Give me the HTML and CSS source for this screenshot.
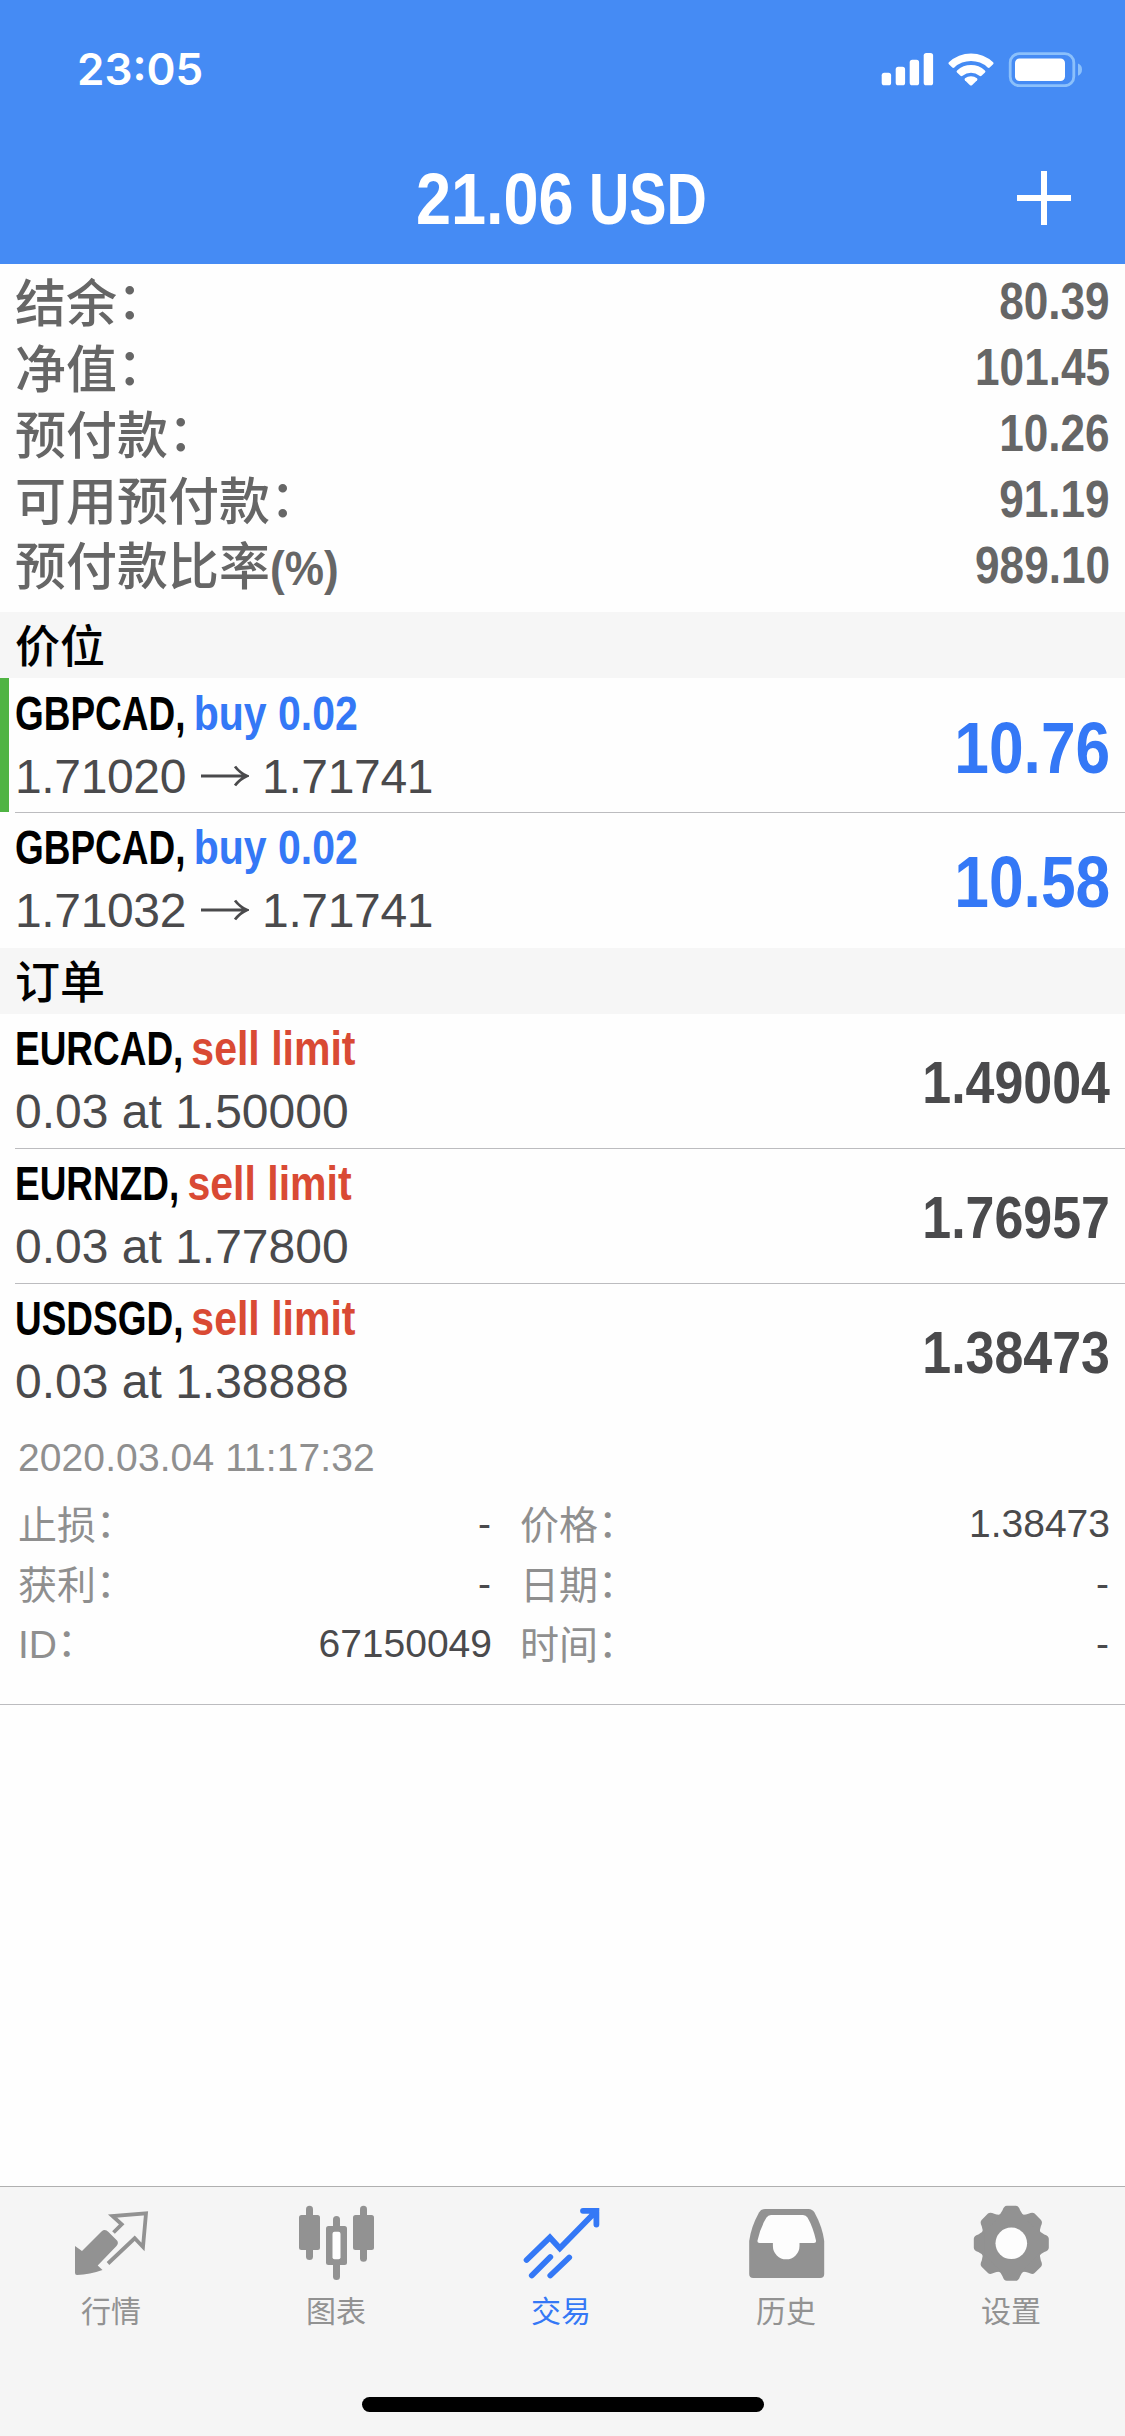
FILE: index.html
```html
<!DOCTYPE html>
<html lang="zh-CN">
<head>
<meta charset="utf-8">
<title>交易</title>
<link rel="stylesheet" href="styles.css">
</head>
<body>
<div class="app">
  <header class="header">
    <div class="status">
      <span class="clock">23:05</span>
      <svg class="status-icons" width="204" height="36" viewBox="0 0 204 36">
        <g fill="#fff">
          <rect x="1.700" y="21.700" width="9.400" height="12.600" rx="2.600"/>
          <rect x="15.700" y="15.800" width="9.400" height="18.500" rx="2.600"/>
          <rect x="29.700" y="8.800" width="9.400" height="25.500" rx="2.600"/>
          <rect x="43.700" y="2" width="9.400" height="32.300" rx="2.600"/>
          <path d="M68.900 11.300A32 32 0 0 1 113.100 11.300Q114 12.200 113.100 13.200L109.700 16.500Q108.700 17.300 107.600 16.400A24.500 24.500 0 0 0 74.400 16.400Q73.300 17.300 72.300 16.500L68.900 13.200Q68 12.200 68.900 11.300Z"/>
          <path d="M77.100 19.400A20.500 20.500 0 0 1 104.900 19.400Q106 20.400 105 21.400L101.500 24.800Q100.500 25.700 99.400 24.800A13.200 13.200 0 0 0 82.600 24.800Q81.500 25.700 80.500 24.800L77 21.400Q76 20.400 77.100 19.400Z"/>
          <path d="M85 27.300A9.500 9.500 0 0 1 97 27.300Q98 28.200 97.100 29.200L92 34.200Q91 35 90 34.200L84.900 29.200Q84 28.200 85 27.300Z"/>
          <rect x="135" y="7.500" width="50" height="22.500" rx="4.500"/>
        </g>
        <rect x="130.200" y="2.700" width="63.600" height="32" rx="9" fill="none" stroke="#8bc0fb" stroke-width="2.800"/>
        <path d="M198 12.500Q202 14 202 18.500T198 24.800Z" fill="#8bc0fb"/>
      </svg>
    </div>
    <div class="nav">
      <h1 class="title"><span class="title-sum">21.06</span><span class="title-cur">USD</span></h1>
      <svg class="add" width="54" height="54" viewBox="0 0 54 54"><path d="M27 0V54M0 27H54" stroke="#fff" stroke-width="6"/></svg>
    </div>
  </header>

  <main class="content">
    <section class="account">
      <div class="account-row"><span>结余<i class="colon">：</i></span><b>80.39</b></div>
      <div class="account-row"><span>净值<i class="colon">：</i></span><b>101.45</b></div>
      <div class="account-row"><span>预付款<i class="colon">：</i></span><b>10.26</b></div>
      <div class="account-row"><span>可用预付款<i class="colon">：</i></span><b>91.19</b></div>
      <div class="account-row"><span>预付款比率<i class="percent">(%)</i></span><b>989.10</b></div>
    </section>

    <h2 class="section">价位</h2>
    <div class="row marked">
      <div class="info">
        <div class="name">GBPCAD, <span class="kind buy">buy 0.02</span></div>
        <div class="detail quote">1.71020 <svg class="arrow" width="48" height="24" viewBox="0 0 48 24"><path d="M0 12H45M34 2.500Q39 9 46 12Q39 15 34 21.500" fill="none" stroke="#4a4a4c" stroke-width="2.800"/></svg> 1.71741</div>
      </div>
      <div class="profit">10.76</div>
    </div>
    <div class="row last">
      <div class="info">
        <div class="name">GBPCAD, <span class="kind buy">buy 0.02</span></div>
        <div class="detail quote">1.71032 <svg class="arrow" width="48" height="24" viewBox="0 0 48 24"><path d="M0 12H45M34 2.500Q39 9 46 12Q39 15 34 21.500" fill="none" stroke="#4a4a4c" stroke-width="2.800"/></svg> 1.71741</div>
      </div>
      <div class="profit">10.58</div>
    </div>

    <h2 class="section">订单</h2>
    <div class="row">
      <div class="info">
        <div class="name">EURCAD, <span class="kind sell">sell limit</span></div>
        <div class="detail">0.03 at 1.50000</div>
      </div>
      <div class="price">1.49004</div>
    </div>
    <div class="row">
      <div class="info">
        <div class="name">EURNZD, <span class="kind sell">sell limit</span></div>
        <div class="detail">0.03 at 1.77800</div>
      </div>
      <div class="price">1.76957</div>
    </div>
    <div class="row last">
      <div class="info">
        <div class="name">USDSGD, <span class="kind sell">sell limit</span></div>
        <div class="detail">0.03 at 1.38888</div>
      </div>
      <div class="price">1.38473</div>
    </div>
    <div class="expanded">
      <div class="opened">2020.03.04 11:17:32</div>
      <div class="facts">
        <div class="fact"><span>止损<i class="colon">：</i></span><em class="none">-</em></div>
        <div class="fact"><span>价格<i class="colon">：</i></span><em>1.38473</em></div>
        <div class="fact"><span>获利<i class="colon">：</i></span><em class="none">-</em></div>
        <div class="fact"><span>日期<i class="colon">：</i></span><em class="none">-</em></div>
        <div class="fact"><span><i class="latin">ID</i><i class="colon">：</i></span><em>67150049</em></div>
        <div class="fact"><span>时间<i class="colon">：</i></span><em class="none">-</em></div>
      </div>
    </div>
  </main>

  <footer class="tabbar">
    <nav class="tabs">
      <a class="tab">
        <svg width="84" height="84" viewBox="0 0 84 84">
          <path d="M5 46L12 51L31.500 31.500Q35 28.500 38.500 32L47 40.500Q49 43 46.500 46L27.700 65.500L32.500 70Q20 74.500 7 75Q5 75 5 73Z" fill="#929292"/>
          <path d="M43.500 32.500L51.700 24.300L42.500 16Q55 15 76 13.300L73 47L64.700 38.300L38 63.500" fill="none" stroke="#929292" stroke-width="3.800"/>
        </svg>
        <span>行情</span>
      </a>
      <a class="tab">
        <svg width="84" height="84" viewBox="0 0 84 84" fill="#929292">
          <rect x="4" y="15" width="21" height="35" rx="2.500"/><rect x="11" y="5.700" width="7" height="54.300" rx="3.500"/>
          <rect x="58" y="15" width="21" height="35" rx="2.500"/><rect x="65" y="5.700" width="7" height="56" rx="3.500"/>
          <rect x="38" y="16" width="7" height="64" rx="3.500"/><rect x="31" y="26" width="21" height="39" rx="2.500"/>
          <rect x="37.500" y="31.700" width="8" height="27.600" rx="2" fill="#fdfdfd"/>
        </svg>
        <span>图表</span>
      </a>
      <a class="tab active">
        <svg width="84" height="84" viewBox="0 0 84 84">
          <path d="M6.600 60L29.900 37.500L39.800 48.300L76.300 11M63 10.800H76.400V24.500M11.800 75.500L30.300 57M30.300 75.500L49.200 57.500" fill="none" stroke="#3478f6" stroke-width="5.800" stroke-linecap="round"/>
        </svg>
        <span>交易</span>
      </a>
      <a class="tab">
        <svg width="84" height="84" viewBox="0 0 84 84">
          <path d="M4.200 41Q6 27 14 12.500Q16 9 20 9H63.500Q67.500 9 69.500 12.500Q77.500 27 79.200 41V74Q79.200 78 75.200 78H8.200Q4.200 78 4.200 74Z" fill="#929292"/>
          <path d="M26 15H58Q61 15 62.500 17.500Q68 27 71 40.500Q71.500 43 69 43H54.500V46A13.300 13.300 0 0 1 27.900 46V43H14.500Q12 43 12.500 40.500Q15.500 27 21.500 17.500Q23 15 26 15Z" fill="#fdfdfd"/>
        </svg>
        <span>历史</span>
      </a>
      <a class="tab">
        <svg width="84" height="84" viewBox="0 0 84 84" fill="#929292">
          <defs><path id="tooth" d="M-14 -27Q-10.500 -29 -8.800 -33Q-7.300 -37.500 -4.500 -37.500H4.500Q7.300 -37.500 8.800 -33Q10.500 -29 14 -27Z"/></defs>
          <g transform="translate(41.300 43.300)">
            <circle r="30"/>
            <use href="#tooth"/><use href="#tooth" transform="rotate(45)"/><use href="#tooth" transform="rotate(90)"/><use href="#tooth" transform="rotate(135)"/><use href="#tooth" transform="rotate(180)"/><use href="#tooth" transform="rotate(225)"/><use href="#tooth" transform="rotate(270)"/><use href="#tooth" transform="rotate(315)"/>
            <circle r="15.800" fill="#fdfdfd"/>
          </g>
        </svg>
        <span>设置</span>
      </a>
    </nav>
    <div class="home"></div>
  </footer>
</div>
</body>
</html>
```

FILE: styles.css
```css
* { box-sizing: border-box; }

body {
  margin: 0;
  background: #fefefe;
  font-family: "Liberation Sans", "Noto Sans CJK SC", sans-serif;
}

.app {
  width: 1125px;
  height: 2436px;
  display: flex;
  flex-direction: column;
  overflow: hidden;
}

/* Header */
.header {
  height: 264px;
  flex: none;
  background: #458bf4;
  color: #fff;
}

.status {
  height: 132px;
  padding: 6px 41px 0 77px;
  display: flex;
  align-items: center;
  justify-content: space-between;
}

.clock {
  font: 600 44px/50px Inter, sans-serif;
  letter-spacing: 0;
}

.nav {
  height: 132px;
  padding: 2px 54px 0;
  display: grid;
  grid-template-columns: 54px 1fr 54px;
  align-items: center;
}

.add { margin-top: -2px; }

.title {
  grid-column: 2;
  margin: 0;
  padding-right: 2px;
  display: flex;
  justify-content: center;
  font-size: 72px;
  line-height: 80px;
  font-weight: 700;
}

.title-sum {
  width: 173px;
  transform: scaleX(0.875);
  transform-origin: left;
}

.title-cur {
  width: 118px;
  transform: scaleX(0.775);
  transform-origin: left;
}

/* Account summary */
.account {
  height: 348px;
  padding: 3px 15px 0;
}

.account-row {
  height: 66px;
  display: flex;
  align-items: center;
  justify-content: space-between;
  color: #666;
  font: 500 51px/66px "Noto Sans CJK SC", sans-serif;
}

.account-row b {
  height: 66px;
  padding-top: 2px;
  font: 700 51px/66px "Liberation Sans", sans-serif;
  transform: scaleX(0.865);
  transform-origin: right;
}

/* Full-width colon, raised to the middle of the characters */
.colon {
  display: inline-block;
  font-style: normal;
  line-height: 1;
  transform: translate(0, -0.06em);
}

.percent {
  display: inline-block;
  font: 700 49px/60px "Liberation Sans", sans-serif;
  transform: scaleX(0.9);
  transform-origin: left;
}

/* Lists */
.section {
  margin: 0;
  height: 66px;
  padding-left: 15px;
  background: #f6f6f6;
  color: #000;
  font: 500 45px/63px "Noto Sans CJK SC", sans-serif;
}

.row {
  height: 135px;
  margin-left: 15px;
  padding-right: 15px;
  display: flex;
  align-items: center;
  justify-content: space-between;
  border-bottom: 1px solid #bcbcbf;
}

.row.last { border-bottom-color: transparent; }

.row.marked {
  margin-left: 0;
  padding-left: 15px;
  border-bottom: 0;
  background:
    linear-gradient(#4fb443, #4fb443) 0 0 / 9px 134px no-repeat,
    linear-gradient(#bcbcbf, #bcbcbf) 15px 134px / 1110px 1px no-repeat;
}

.info {
  height: 134px;
  padding-top: 3px;
}

.name {
  height: 63px;
  color: #000;
  font-size: 48px;
  line-height: 63px;
  font-weight: 700;
  white-space: nowrap;
  transform: scaleX(0.77);
  transform-origin: left;
}

.kind {
  display: inline-block;
  margin-left: -3px;
  transform: scaleX(1.11);
  transform-origin: left;
}

.buy { color: #3478f6; }
.sell { color: #d94a34; }

.detail {
  color: #4a4a4c;
  font-size: 48px;
  line-height: 63px;
  white-space: nowrap;
}

.quote { letter-spacing: -0.35px; }

.arrow {
  margin-left: 2px;
  vertical-align: 5px;
}

.profit,
.price {
  padding-top: 4px;
  font-weight: 700;
  line-height: 80px;
  transform: scaleX(0.865);
  transform-origin: right;
}

.profit { color: #3478f6; font-size: 72px; }
.price { color: #4a4a4c; font-size: 60px; }

/* Expanded order */
.expanded {
  height: 286px;
  padding: 14px 15px 0 18px;
  border-bottom: 1px solid #bcbcbf;
  font-size: 39px;
}

.opened {
  height: 59px;
  color: #8f8f8f;
  line-height: 50px;
  letter-spacing: 0.1px;
}

.facts {
  display: grid;
  grid-template-columns: 474px 1fr;
  column-gap: 28px;
  grid-auto-rows: 60px;
}

.fact {
  display: flex;
  align-items: center;
  justify-content: space-between;
  color: #8f8f8f;
  font: 400 39px/60px "Noto Sans CJK SC", sans-serif;
}

.fact em {
  padding-top: 4px;
  color: #4a4a4c;
  font: 400 39px/60px "Liberation Sans", sans-serif;
}

.fact .none { padding-right: 1px; }

.latin { font: 400 39px/58px "Liberation Sans", sans-serif; }

/* Tab bar */
.tabbar {
  height: 250px;
  margin-top: auto;
  flex: none;
  padding-bottom: 24px;
  display: flex;
  flex-direction: column;
  align-items: center;
  justify-content: space-between;
  background: #f5f5f5;
  border-top: 1px solid #b0b0b0;
}

.tabs {
  width: 1125px;
  display: grid;
  grid-template-columns: repeat(5, 225px);
}

.tab {
  padding: 13px 1px 0 0;
  display: flex;
  flex-direction: column;
  align-items: center;
  color: #929292;
  font: 400 30px/40px "Noto Sans CJK SC", sans-serif;
}

.tab span {
  margin-top: 5px;
  padding-right: 2px;
}

.tab.active { color: #3478f6; }

.home {
  width: 402px;
  height: 15px;
  border-radius: 8px;
  background: #000;
}
```
